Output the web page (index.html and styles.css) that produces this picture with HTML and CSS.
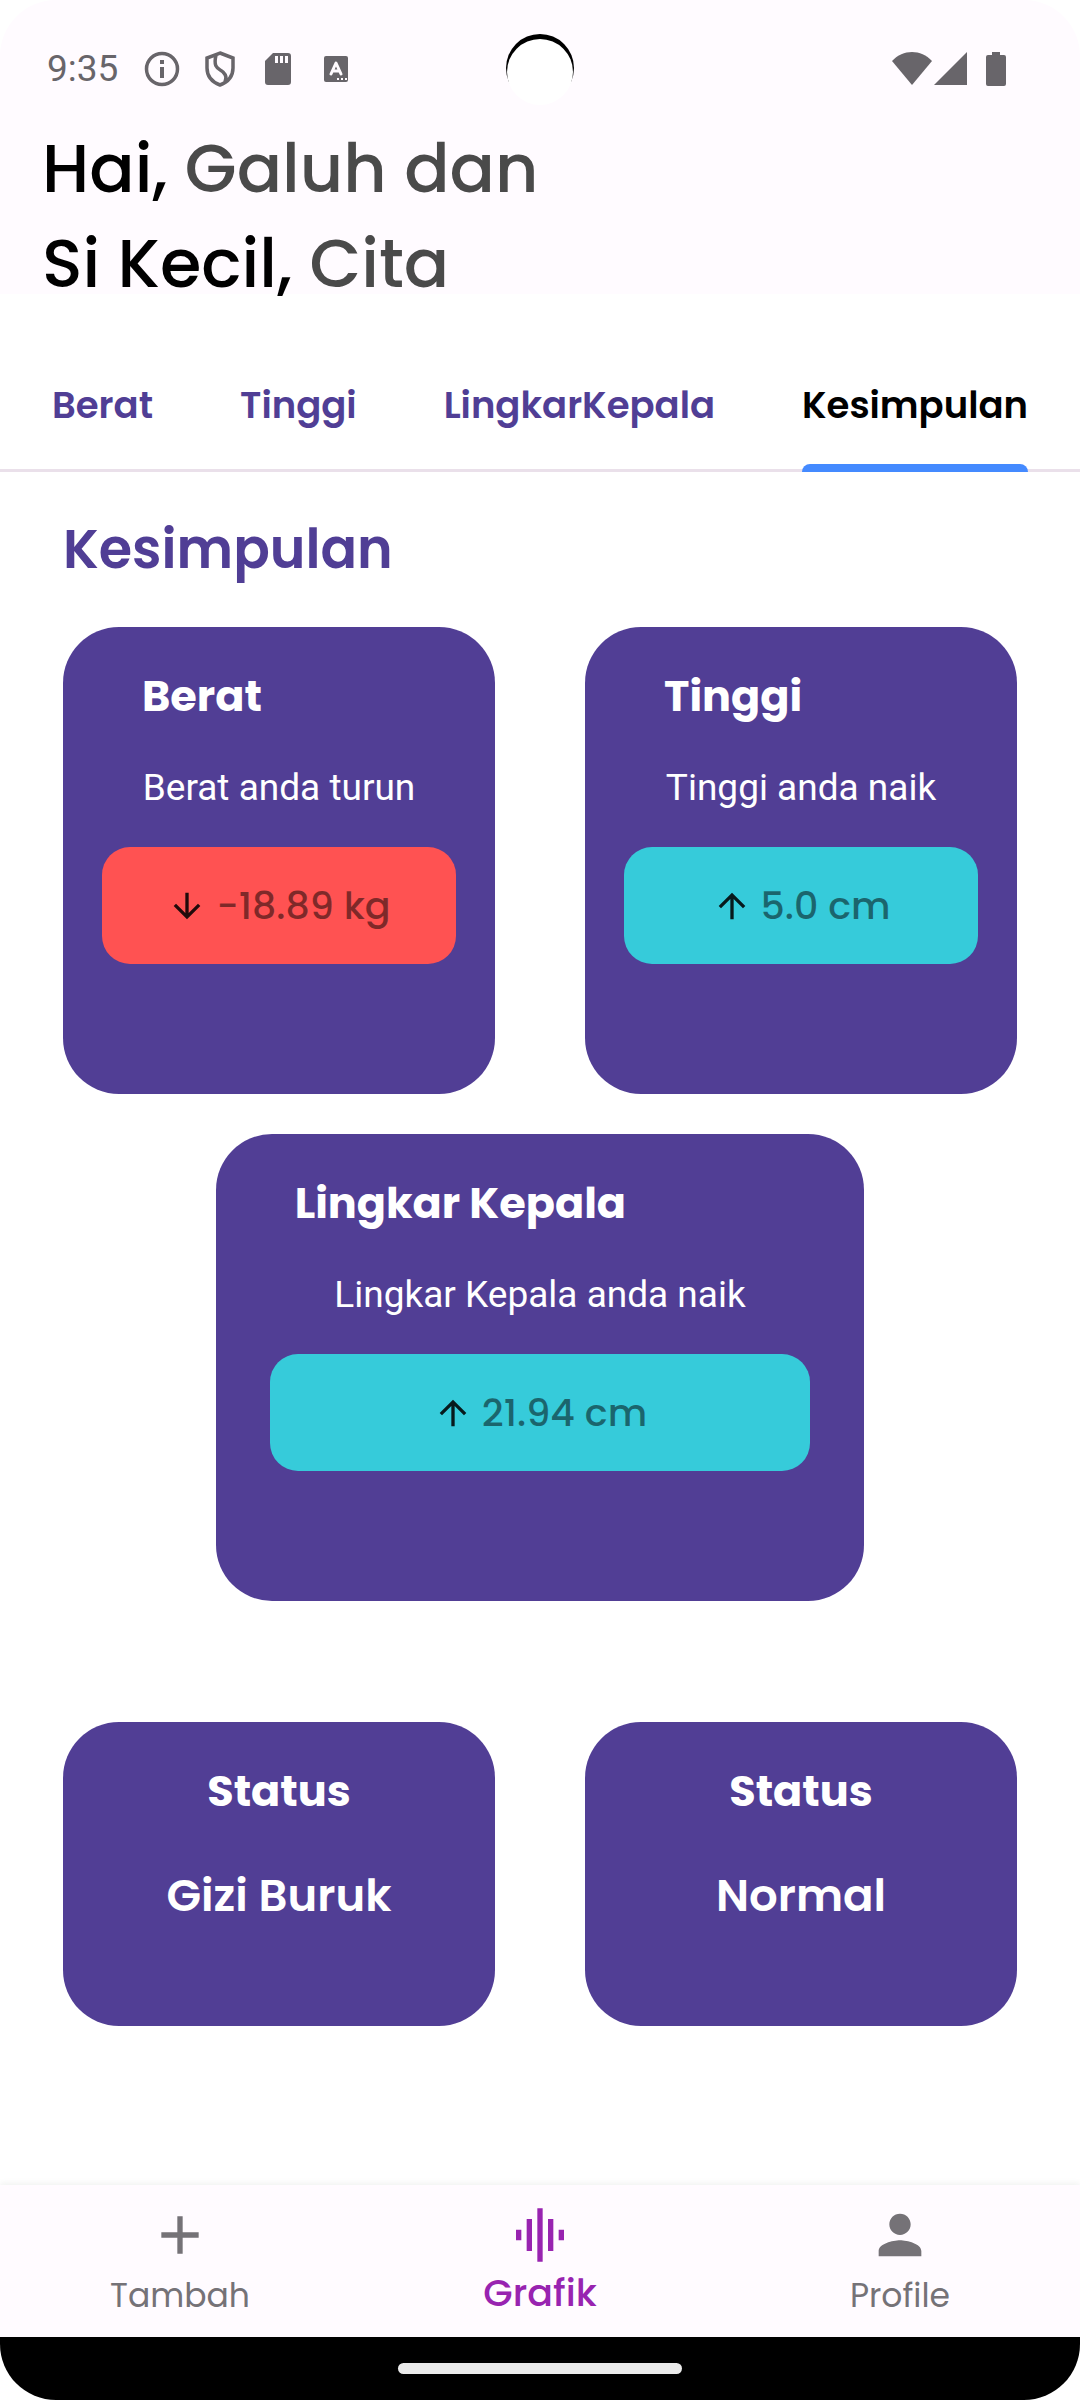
FILE: index.html
```html
<!DOCTYPE html>
<html lang="id">
<head>
<meta charset="utf-8">
<meta name="viewport" content="width=device-width, initial-scale=1">
<title>Kesimpulan</title>
<link rel="stylesheet" href="styles.css">
</head>
<body>
<div class="screen">
  <header class="header">
    <div class="statusbar">
      <span class="clock">9:35</span>
      <div class="notices">
        <svg class="notice" viewBox="0 0 36 36"><circle cx="18" cy="18" r="15.5" fill="none" stroke="currentColor" stroke-width="3.500"/><path fill="currentColor" d="M16 9h4v4h-4zM16 16h4v11h-4z"/></svg>
        <svg class="notice" viewBox="0 0 36 36"><path fill="none" stroke="currentColor" stroke-width="3.500" d="M18 2 31 7v10c0 8-5 14-13 17C10 31 5 25 5 17V7zM14 4c-3 13 2 13 7 17 4 4 3 6 2 10"/></svg>
        <svg class="notice" viewBox="0 0 36 36"><path fill="currentColor" fill-rule="evenodd" d="M13 2h15a3 3 0 0 1 3 3v26a3 3 0 0 1-3 3H8a3 3 0 0 1-3-3V10zM15 5v7h3V5zM20 5v7h3V5zM25 5v7h3V5z"/></svg>
        <svg class="notice" viewBox="0 0 36 36"><rect x="6" y="5" width="24" height="26" rx="2" fill="currentColor"/><path fill="none" stroke="#fffbff" stroke-width="3" stroke-linejoin="round" stroke-linecap="round" d="m13 23 5-11 5 11M15 20h6"/><path fill="#fffbff" d="M19 27h2v2h-2zM23 27h2v2h-2zM27 27h2v2h-2z"/></svg>
      </div>
      <svg class="camera" viewBox="0 0 68 72"><circle cx="34" cy="34" r="34"/><circle cx="34" cy="38" r="33" fill="#fff"/></svg>
      <div class="signals">
        <svg width="40" height="36" viewBox="0 0 40 36"><path fill="currentColor" d="M0 10C11-2 29-2 40 10L20 34z"/></svg>
        <svg width="34" height="36" viewBox="0 0 34 36"><path fill="currentColor" d="M33 1v33H0z"/></svg>
        <svg class="battery" width="20" height="36" viewBox="0 0 20 36"><path fill="currentColor" d="M6 1h8v3h4a2 2 0 0 1 2 2v27a2 2 0 0 1-2 2H2a2 2 0 0 1-2-2V6a2 2 0 0 1 2-2h4z"/></svg>
      </div>
    </div>
    <h1 class="greeting">Hai, <span class="name">Galuh dan</span><br>Si Kecil, <span class="name">Cita</span></h1>
  </header>

  <nav class="tabs">
    <a class="tab" href="#berat">Berat</a>
    <a class="tab" href="#tinggi">Tinggi</a>
    <a class="tab" href="#lingkar">LingkarKepala</a>
    <a class="tab active" href="#kesimpulan">Kesimpulan</a>
  </nav>

  <main class="content" id="kesimpulan">
    <h2 class="section-title">Kesimpulan</h2>
    <div class="pair">
      <section class="card measure" id="berat">
        <h3 class="card-title">Berat</h3>
        <p class="note">Berat anda turun</p>
        <div class="value down"><svg class="arrow" viewBox="0 0 24 24"><path d="M20 12l-1.410-1.410L13 16.170V4h-2v12.170l-5.580-5.590L4 12l8 8z"/></svg><span class="amount">-18.89 kg</span></div>
      </section>
      <section class="card measure" id="tinggi">
        <h3 class="card-title">Tinggi</h3>
        <p class="note">Tinggi anda naik</p>
        <div class="value up"><svg class="arrow" viewBox="0 0 24 24"><path d="M4 12l1.410 1.410L11 7.830V20h2V7.830l5.580 5.590L20 12l-8-8z"/></svg><span class="amount">5.0 cm</span></div>
      </section>
    </div>
    <section class="card measure wide" id="lingkar">
      <h3 class="card-title">Lingkar Kepala</h3>
      <p class="note">Lingkar Kepala anda naik</p>
      <div class="value up"><svg class="arrow" viewBox="0 0 24 24"><path d="M4 12l1.410 1.410L11 7.830V20h2V7.830l5.580 5.590L20 12l-8-8z"/></svg><span class="amount">21.94 cm</span></div>
    </section>
    <div class="pair results">
      <section class="card result"><h3 class="card-title">Status</h3><p class="verdict">Gizi Buruk</p></section>
      <section class="card result"><h3 class="card-title">Status</h3><p class="verdict">Normal</p></section>
    </div>
  </main>

  <nav class="bottom-nav">
    <a class="item" href="#tambah"><svg class="item-icon" viewBox="0 0 24 24"><path fill="currentColor" d="M19 13h-6v6h-2v-6H5v-2h6V5h2v6h6z"/></svg><span>Tambah</span></a>
    <a class="item current" href="#grafik"><svg class="item-icon" viewBox="0 0 24 24"><path fill="currentColor" d="M7 18h2V6H7zM11 22h2V2h-2zM3 14h2v-4H3zM15 18h2V6h-2zM19 10v4h2v-4z"/></svg><span>Grafik</span></a>
    <a class="item" href="#profile"><svg class="item-icon" viewBox="0 0 24 24"><path fill="currentColor" d="M12 12c2.210 0 4-1.790 4-4s-1.790-4-4-4-4 1.790-4 4 1.790 4 4 4zm0 2c-2.670 0-8 1.340-8 4v2h16v-2c0-2.660-5.330-4-8-4z"/></svg><span>Profile</span></a>
  </nav>
  <div class="gesture-bar"><div class="handle"></div></div>
</div>
</body>
</html>
```
FILE: styles.css
```css
* { box-sizing: border-box; }

body {
  margin: 0;
  background: #fff;
  color: #000;
  font-family: Poppins, Inter, "Open Sans", sans-serif;
}

h1, h2, h3, p { margin: 0; }
a { color: inherit; text-decoration: none; }
svg { display: block; flex: none; }

.screen {
  display: flex;
  flex-direction: column;
  min-height: 100vh;
  border-radius: 56px;
  overflow: hidden;
}

.header { background: #fffbff; height: 294px; }

.statusbar {
  position: relative;
  display: flex;
  align-items: center;
  height: 121px;
  padding: 17px 74px 0 47px;
  color: #68656a;
}
.clock { font: 400 37px/44px Roboto, sans-serif; }
.notices { display: flex; gap: 22px; margin-left: 26px; }
.notice { width: 36px; height: 36px; }
.camera { position: absolute; left: 50%; top: 34px; width: 68px; height: 72px; margin-left: -34px; }
.signals { display: flex; gap: 2px; margin-left: auto; }
.battery { margin-left: 16px; }

.greeting { padding: 0 42px; font-size: 67px; font-weight: 500; line-height: 95px; }
.name { color: #4a4a4a; }

.tabs {
  display: flex;
  justify-content: space-between;
  height: 178px;
  padding: 0 52px;
  border-bottom: 3px solid #eae0ea;
  color: #503e95;
  font-size: 37px;
  font-weight: 600;
  line-height: 56px;
}
.tab {
  display: flex;
  flex-direction: column;
  justify-content: space-between;
  padding-top: 83px;
  margin-bottom: -3px;
}
.active { color: #000; }
.active::after { content: ""; height: 8px; border-radius: 8px 8px 0 0; background: #448aff; }

.content { padding: 41px 63px 0; flex: 1; }
.section-title { color: #503e95; font-size: 54px; font-weight: 600; line-height: 72px; margin-bottom: 42px; }
.pair { display: grid; grid-template-columns: 1fr 1fr; gap: 90px; }
.card { border-radius: 56px; background: #513e95; color: #fff; }
.measure { height: 467px; padding: 39px 39px 0; }
.wide { width: 68%; margin: 40px auto 0; padding: 39px 54px 0; }
.card-title { font-size: 43px; font-weight: 700; line-height: 60px; padding-left: 40px; }
.wide .card-title { padding-left: 25px; }
.note { margin-top: 40px; font: 400 37px/44px Roboto, sans-serif; text-align: center; }
.value {
  display: flex;
  align-items: center;
  justify-content: center;
  gap: 9px;
  height: 117px;
  margin-top: 37px;
  border-radius: 28px;
  font-size: 38px;
  font-weight: 500;
}
.down { background: #ff5252; }
.up { background: #36cbda; }
.arrow { width: 40px; height: 40px; fill: rgba(0, 0, 0, 0.87); }
.amount { color: rgba(0, 0, 0, 0.5); }

.results { margin-top: 121px; }
.result { height: 304px; padding-top: 39px; text-align: center; }
.result .card-title { padding: 0; }
.verdict { margin-top: 45px; font-size: 45px; font-weight: 600; line-height: 60px; }

.bottom-nav {
  display: grid;
  grid-template-columns: 1fr 1fr 1fr;
  height: 152px;
  background: #fffbff;
  box-shadow: 0 -2px 6px rgba(0, 40, 20, 0.06);
  color: #757277;
  font-size: 33px;
  line-height: 44px;
}
.item { display: flex; flex-direction: column; align-items: center; padding-top: 18px; gap: 7px; }
.item-icon { width: 64px; height: 64px; }
.current { gap: 4px; color: #9823b0; font-size: 38px; font-weight: 500; }

.gesture-bar { display: flex; justify-content: center; align-items: center; height: 63px; background: #000; }
.handle { width: 284px; height: 11px; border-radius: 6px; background: #ebebeb; }
```
